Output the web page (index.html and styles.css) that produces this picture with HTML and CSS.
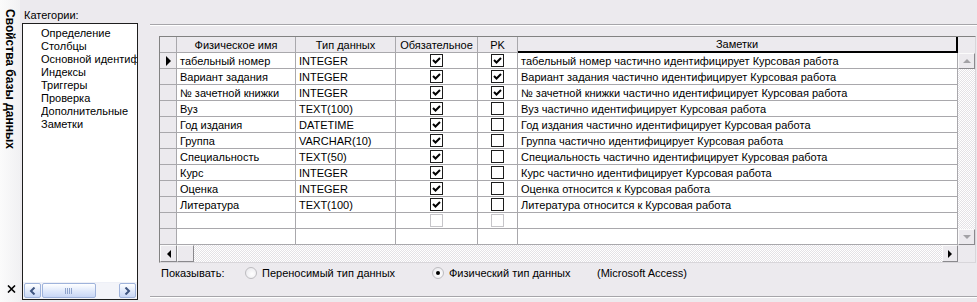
FILE: index.html
```html
<!DOCTYPE html>
<html lang="ru">
<head>
<meta charset="utf-8">
<title>Свойства базы данных</title>
<link rel="stylesheet" href="styles.css">
</head>
<body>
<div class="app">
  <aside class="dock">
    <div class="dock-title">Свойства базы данных</div>
    <svg class="dock-close" width="9" height="8" viewBox="0 0 9 8"><path d="M1 0.5 L8 7.5 M8 0.5 L1 7.5" stroke="#000" stroke-width="1.6" fill="none"/></svg>
  </aside>

  <section class="cats">
    <div class="cats-label">Категории:</div>
    <div class="listbox">
      <ul class="cat-list">
        <li>Определение</li>
        <li class="current"><svg class="cur-arrow" width="10" height="9" viewBox="0 0 10 9"><path d="M0.5 2.5 H4.5 V0.5 L8.5 4.5 L4.5 8.5 V6.5 H0.5 Z" fill="#D9D9DC" stroke="#2A2A2A" stroke-width="1"/></svg>Столбцы</li>
        <li>Основной идентиф</li>
        <li>Индексы</li>
        <li>Триггеры</li>
        <li>Проверка</li>
        <li>Дополнительные</li>
        <li>Заметки</li>
      </ul>
      <div class="xp-scroll">
        <div class="xp-btn"><svg width="7" height="8" viewBox="0 0 7 8"><path d="M5.5 0.5 L2 4 L5.5 7.5" stroke="#3F5580" stroke-width="2" fill="none"/></svg></div>
        <div class="xp-thumb"><span class="grip"></span></div>
        <div class="xp-btn"><svg width="7" height="8" viewBox="0 0 7 8"><path d="M1.5 0.5 L5 4 L1.5 7.5" stroke="#3F5580" stroke-width="2" fill="none"/></svg></div>
      </div>
    </div>
  </section>

  <section class="main">
    <div class="etched"></div>
    <div class="grid">
      <div class="grid-top">
        <div class="cells">
          <div class="hd sel"></div>
          <div class="hd">Физическое имя</div>
          <div class="hd">Тип данных</div>
          <div class="hd">Обязательное</div>
          <div class="hd">PK</div>
          <div class="hd hd-notes">Заметки</div>

          <div class="sel"><span class="row-ptr"></span></div>
          <div class="c">табельный номер</div><div class="c">INTEGER</div>
          <div class="cc"><span class="cb on"><svg viewBox="0 0 11 11"><path d="M2 5 L4.5 7.5 L9 3" stroke="#000" stroke-width="2" fill="none"/></svg></span></div>
          <div class="cc"><span class="cb on"><svg viewBox="0 0 11 11"><path d="M2 5 L4.5 7.5 L9 3" stroke="#000" stroke-width="2" fill="none"/></svg></span></div>
          <div class="c">табельный номер частично идентифицирует Курсовая работа</div>

          <div class="sel"></div>
          <div class="c">Вариант задания</div><div class="c">INTEGER</div>
          <div class="cc"><span class="cb on"><svg viewBox="0 0 11 11"><path d="M2 5 L4.5 7.5 L9 3" stroke="#000" stroke-width="2" fill="none"/></svg></span></div>
          <div class="cc"><span class="cb on"><svg viewBox="0 0 11 11"><path d="M2 5 L4.5 7.5 L9 3" stroke="#000" stroke-width="2" fill="none"/></svg></span></div>
          <div class="c">Вариант задания частично идентифицирует Курсовая работа</div>

          <div class="sel"></div>
          <div class="c">№ зачетной книжки</div><div class="c">INTEGER</div>
          <div class="cc"><span class="cb on"><svg viewBox="0 0 11 11"><path d="M2 5 L4.5 7.5 L9 3" stroke="#000" stroke-width="2" fill="none"/></svg></span></div>
          <div class="cc"><span class="cb on"><svg viewBox="0 0 11 11"><path d="M2 5 L4.5 7.5 L9 3" stroke="#000" stroke-width="2" fill="none"/></svg></span></div>
          <div class="c">№ зачетной книжки частично идентифицирует Курсовая работа</div>

          <div class="sel"></div>
          <div class="c">Вуз</div><div class="c">TEXT(100)</div>
          <div class="cc"><span class="cb on"><svg viewBox="0 0 11 11"><path d="M2 5 L4.5 7.5 L9 3" stroke="#000" stroke-width="2" fill="none"/></svg></span></div>
          <div class="cc"><span class="cb"></span></div>
          <div class="c">Вуз частично идентифицирует Курсовая работа</div>

          <div class="sel"></div>
          <div class="c">Год издания</div><div class="c">DATETIME</div>
          <div class="cc"><span class="cb on"><svg viewBox="0 0 11 11"><path d="M2 5 L4.5 7.5 L9 3" stroke="#000" stroke-width="2" fill="none"/></svg></span></div>
          <div class="cc"><span class="cb"></span></div>
          <div class="c">Год издания частично идентифицирует Курсовая работа</div>

          <div class="sel"></div>
          <div class="c">Группа</div><div class="c">VARCHAR(10)</div>
          <div class="cc"><span class="cb on"><svg viewBox="0 0 11 11"><path d="M2 5 L4.5 7.5 L9 3" stroke="#000" stroke-width="2" fill="none"/></svg></span></div>
          <div class="cc"><span class="cb"></span></div>
          <div class="c">Группа частично идентифицирует Курсовая работа</div>

          <div class="sel"></div>
          <div class="c">Специальность</div><div class="c">TEXT(50)</div>
          <div class="cc"><span class="cb on"><svg viewBox="0 0 11 11"><path d="M2 5 L4.5 7.5 L9 3" stroke="#000" stroke-width="2" fill="none"/></svg></span></div>
          <div class="cc"><span class="cb"></span></div>
          <div class="c">Специальность частично идентифицирует Курсовая работа</div>

          <div class="sel"></div>
          <div class="c">Курс</div><div class="c">INTEGER</div>
          <div class="cc"><span class="cb on"><svg viewBox="0 0 11 11"><path d="M2 5 L4.5 7.5 L9 3" stroke="#000" stroke-width="2" fill="none"/></svg></span></div>
          <div class="cc"><span class="cb"></span></div>
          <div class="c">Курс частично идентифицирует Курсовая работа</div>

          <div class="sel"></div>
          <div class="c">Оценка</div><div class="c">INTEGER</div>
          <div class="cc"><span class="cb on"><svg viewBox="0 0 11 11"><path d="M2 5 L4.5 7.5 L9 3" stroke="#000" stroke-width="2" fill="none"/></svg></span></div>
          <div class="cc"><span class="cb"></span></div>
          <div class="c">Оценка относится к Курсовая работа</div>

          <div class="sel"></div>
          <div class="c">Литература</div><div class="c">TEXT(100)</div>
          <div class="cc"><span class="cb on"><svg viewBox="0 0 11 11"><path d="M2 5 L4.5 7.5 L9 3" stroke="#000" stroke-width="2" fill="none"/></svg></span></div>
          <div class="cc"><span class="cb"></span></div>
          <div class="c">Литература относится к Курсовая работа</div>

          <div class="sel"></div>
          <div class="c"></div><div class="c"></div>
          <div class="cc"><span class="cb off"></span></div>
          <div class="cc"><span class="cb off"></span></div>
          <div class="c"></div>

          <div class="sel"></div>
          <div class="c"></div><div class="c"></div>
          <div class="c"></div><div class="c"></div>
          <div class="c"></div>
        </div>
        <div class="vbar">
          <div class="vhead"></div>
          <div class="sbtn"><span class="tri up"></span></div>
          <div class="track"></div>
          <div class="sbtn"><span class="tri down"></span></div>
        </div>
      </div>
      <div class="grid-bottom">
        <div class="sbtn hb"><span class="tri left"></span></div>
        <div class="sbtn hthumb"></div>
        <div class="track"></div>
        <div class="sbtn hb"><span class="tri right"></span></div>
        <div class="corner"></div>
      </div>
    </div>

    <div class="show-row">
      <span class="show-label">Показывать:</span>
      <label class="opt opt1"><span class="radio"></span>Переносимый тип данных</label>
      <label class="opt opt2"><span class="radio checked"></span>Физический тип данных</label>
      <span class="dbms">(Microsoft Access)</span>
    </div>
    <div class="etched bottom"></div>
  </section>
</div>
</body>
</html>
```

FILE: styles.css
```css
* { box-sizing: border-box; }
html, body { margin: 0; padding: 0; }
body {
  width: 977px;
  height: 302px;
  overflow: hidden;
  background: #ECEAEE;
  color: #000;
  font: 11px/13px "Liberation Sans", Arial, sans-serif;
}
.app { display: flex; height: 302px; }

/* docked title strip */
.dock {
  width: 20px;
  flex: none;
  display: flex;
  flex-direction: column;
  justify-content: space-between;
  align-items: center;
  padding: 9px 0 9px;
  background: linear-gradient(to right, #FBFBFB, #F1F1F3);
}
.dock-title {
  writing-mode: vertical-rl;
  font-weight: bold;
  font-size: 12px;
  line-height: 14px;
  white-space: nowrap;
}
.dock-close { display: block; margin-left: 2px; }

/* categories */
.cats {
  width: 116px;
  flex: none;
  margin-left: 2px;
  padding-top: 9px;
  display: flex;
  flex-direction: column;
}
.cats-label { height: 13px; margin: 0 0 1px 2px; }
.listbox {
  width: 116px;
  height: 277px;
  border: 1px solid #1E1E1E;
  background: #fff;
  display: flex;
  flex-direction: column;
  justify-content: space-between;
}
.cat-list { list-style: none; margin: 0; padding: 3px 0 0 18px; }
.cat-list li { height: 13px; white-space: nowrap; overflow: hidden; position: relative; }
.cur-arrow { position: absolute; left: -14px; top: 3px; }

.xp-scroll {
  height: 17px;
  display: flex;
  align-items: stretch;
  padding: 0 1px 1px 1px;
  background: #F3F4F9;
  border-top: 1px solid #EEF0F7;
}
.xp-btn, .xp-thumb {
  border: 1px solid #9FB3DB;
  border-radius: 2px;
  background: linear-gradient(to bottom, #FFFFFF, #DCE6FA 60%, #C9D7F5);
  display: flex;
  align-items: center;
  justify-content: center;
}
.xp-btn { width: 17px; }
.xp-thumb { width: 54px; margin-left: 1px; margin-right: auto; }
.grip {
  width: 8px;
  height: 6px;
  background: repeating-linear-gradient(to right, #8EA3CC 0 1px, transparent 1px 2px);
}

/* main panel */
.main {
  flex: 1;
  margin-left: 12px;
  padding-top: 24px;
  display: flex;
  flex-direction: column;
}
.etched { height: 2px; border-top: 1px solid #A6A5A9; border-bottom: 1px solid #FFFFFF; flex: none; }
.etched.bottom { margin-top: 15px; }

.grid {
  margin: 10px 0 0 9px;
  width: 817px;
  height: 227px;
  border: 1px solid;
  border-color: #828282 #D8D6DA #D8D6DA #828282;
  background: #fff;
  display: flex;
  flex-direction: column;
  flex: none;
}
.grid-top { display: flex; height: 208px; }
.cells {
  width: 798px;
  display: grid;
  grid-template-columns: 17px 119px 100px 82px 40px 440px;
  grid-auto-rows: 16px;
}
.cells > div {
  border-right: 1px solid #A9A8AC;
  border-bottom: 1px solid #A9A8AC;
  white-space: nowrap;
  overflow: hidden;
  line-height: 14px;
  padding-top: 1px;
}
.cells .hd { background: #ECEAEE; text-align: center; }
.cells .hd-notes { border-right: 2px solid #000; border-bottom: 2px solid #000; line-height: 13px; }
.cells .sel { background: #ECEAEE; display: flex; align-items: center; justify-content: center; padding-top: 0; }
.cells .c { padding-left: 3px; }
.cells .cc { display: flex; align-items: center; justify-content: center; padding-top: 0; }
.row-ptr {
  width: 0; height: 0;
  border-left: 5px solid #000;
  border-top: 5px solid transparent;
  border-bottom: 5px solid transparent;
  margin-left: 1px;
}
.cb {
  width: 13px;
  height: 13px;
  border: 1px solid #1C1C1C;
  background: #fff;
  display: block;
}
.cb svg { display: block; width: 11px; height: 11px; }
.cb.off { border-color: #C6C5C9; }

/* classic scrollbars */
.vbar { width: 17px; display: flex; flex-direction: column; }
.vhead { height: 16px; background: #ECEAEE; flex: none; }
.sbtn {
  flex: none;
  height: 16px;
  background: #ECEAEE;
  border: 1px solid;
  border-color: #FBFBFB #8A898D #8A898D #FBFBFB;
  display: flex;
  align-items: center;
  justify-content: center;
}
.track {
  flex: 1;
  background: repeating-conic-gradient(#FFFFFF 0 25%, #E4E2E6 0 50%) 0 0 / 2px 2px;
}
.tri { width: 0; height: 0; display: block; }
.tri.up { border-left: 4px solid transparent; border-right: 4px solid transparent; border-bottom: 4px solid #A3A2A6; }
.tri.down { border-left: 4px solid transparent; border-right: 4px solid transparent; border-top: 4px solid #A3A2A6; }
.tri.left { border-top: 4px solid transparent; border-bottom: 4px solid transparent; border-right: 4px solid #000; }
.tri.right { border-top: 4px solid transparent; border-bottom: 4px solid transparent; border-left: 4px solid #000; }

.grid-bottom { display: flex; height: 17px; }
.grid-bottom .sbtn { height: 17px; }
.hb { width: 17px; }
.hb:nth-last-child(2) { width: 16px; }
.hthumb { width: 17px; }
.corner { width: 17px; background: #ECEAEE; }

/* show row */
.show-row {
  margin-top: 2px;
  height: 16px;
  display: flex;
  align-items: center;
  padding-left: 11px;
  line-height: 16px;
  white-space: nowrap;
}
.show-label { width: 84px; }
.opt { display: flex; align-items: center; }
.opt1 { width: 187px; }
.opt2 { width: 165px; }
.radio {
  width: 12px;
  height: 12px;
  border-radius: 50%;
  border: 1px solid #BDBCC0;
  background: radial-gradient(circle at 60% 60%, #FFFFFF, #E6E5EA);
  margin-right: 5px;
  display: flex;
  align-items: center;
  justify-content: center;
}
.radio.checked::after {
  content: "";
  width: 4px;
  height: 4px;
  border-radius: 50%;
  background: #000;
}
```
